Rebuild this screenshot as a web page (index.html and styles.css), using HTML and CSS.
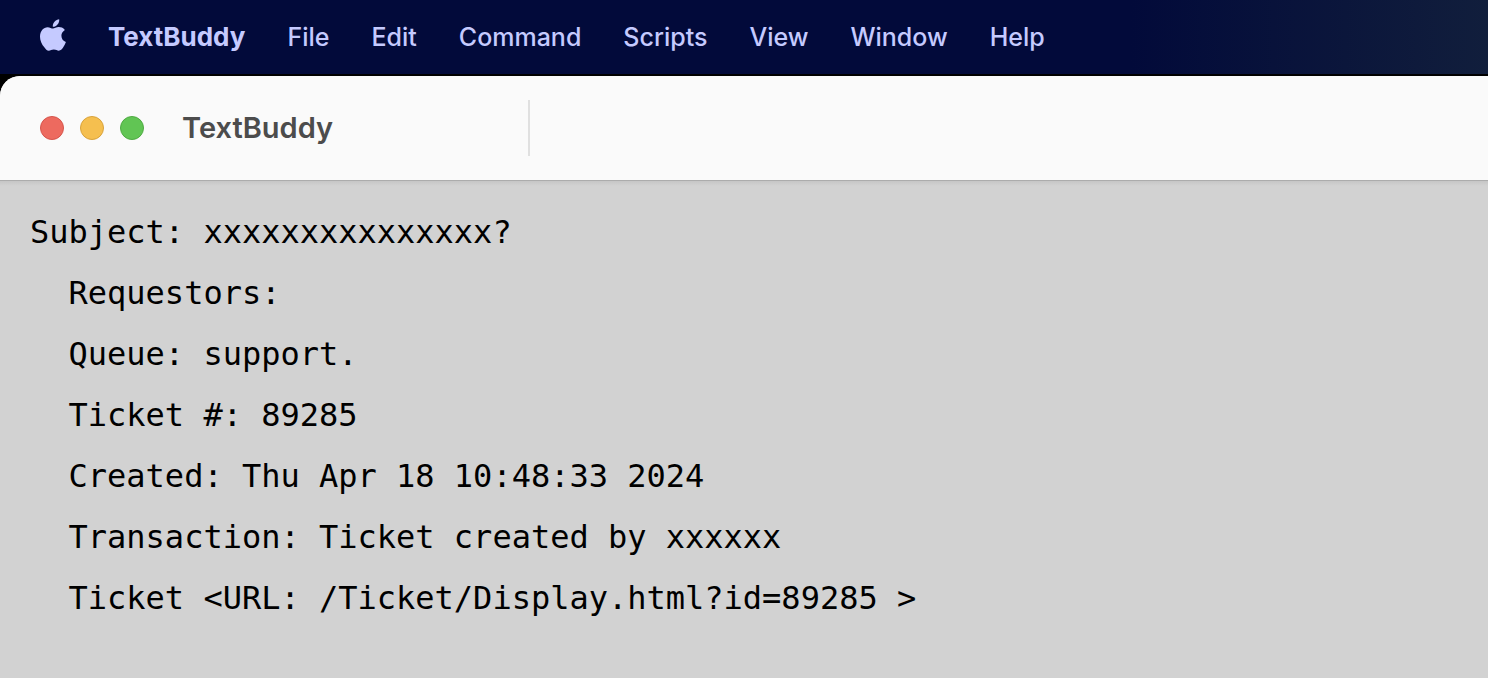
FILE: index.html
```html
<!DOCTYPE html>
<html lang="en">
<head>
<meta charset="utf-8">
<title>TextBuddy</title>
<link rel="stylesheet" href="styles.css">
</head>
<body>
<nav class="menubar" aria-label="Menu bar">
  <button class="menu menu-logo" type="button" aria-label="Apple menu">
    <svg class="logo" viewBox="0 0 26 32" aria-hidden="true">
      <path d="M19.2 0.2c.3 2-.5 3.900-1.700 5.300-1.200 1.400-3 2.400-4.700 2.300-.3-1.900.6-3.800 1.700-5.100C15.700 1.300 17.700.3 19.200.2z"/>
      <path d="M24.900 10.900c-2.200 1.400-3.500 3.300-3.500 5.900 0 3 1.800 5.300 4.500 6.300-.6 2-1.600 3.800-2.800 5.500-1.200 1.700-2.400 3.100-4.300 3.100-1.800 0-2.500-1.200-5-1.200-2.400 0-3.200 1.200-5 1.200-1.900 0-3.200-1.500-4.500-3.400C1.700 25.300 0 21.500 0 17.700c0-5.900 3.600-9.500 7.600-9.500 2.200 0 4 1.400 5.400 1.400 1.300 0 3.300-1.500 5.800-1.500 1.900 0 4.500.7 6.100 2.800z"/>
    </svg>
  </button>
  <button class="menu menu-app" type="button">TextBuddy</button>
  <button class="menu" type="button">File</button>
  <button class="menu" type="button">Edit</button>
  <button class="menu" type="button">Command</button>
  <button class="menu" type="button">Scripts</button>
  <button class="menu" type="button">View</button>
  <button class="menu" type="button">Window</button>
  <button class="menu" type="button">Help</button>
</nav>
<main class="window">
  <header class="titlebar">
    <div class="heading">
      <div class="controls">
        <button class="control close" type="button" aria-label="Close"></button>
        <button class="control minimize" type="button" aria-label="Minimize"></button>
        <button class="control zoom" type="button" aria-label="Zoom"></button>
      </div>
      <h1 class="title">TextBuddy</h1>
    </div>
  </header>
  <textarea class="editor" aria-label="Document text" spellcheck="false">Subject: xxxxxxxxxxxxxxx?
  Requestors:
  Queue: support.
  Ticket #: 89285
  Created: Thu Apr 18 10:48:33 2024
  Transaction: Ticket created by xxxxxx
  Ticket &lt;URL: /Ticket/Display.html?id=89285 &gt;</textarea>
</main>
</body>
</html>
```

FILE: styles.css
```css
* {
  box-sizing: border-box;
}

body {
  margin: 0;
  min-height: 100vh;
  display: flex;
  flex-direction: column;
  background: #000;
  font-family: Inter, "Liberation Sans", sans-serif;
}

button {
  border: 0;
  padding: 0;
  background: none;
  font: inherit;
  color: inherit;
}

.menubar {
  display: flex;
  align-items: center;
  gap: 42px;
  padding: 22px 40px;
  margin-bottom: 2px;
  background: linear-gradient(90deg, #020a3a 76%, #111e3c 100%);
  color: #c5caff;
  font-size: 25px;
  font-weight: 500;
  line-height: 30px;
}

.menu {
  white-space: nowrap;
}

.menu-app {
  font-size: 26px;
  font-weight: 700;
}

.logo {
  display: block;
  width: 26px;
  height: 32px;
  margin: -3px 0 1px;
  fill: currentColor;
}

.window {
  flex: 1;
  display: flex;
  flex-direction: column;
  overflow: hidden;
  border-top-left-radius: 20px;
  background: #d2d2d2;
}

.titlebar {
  padding: 24px 0;
  background: #fafafa;
}

.heading {
  display: flex;
  align-items: center;
  gap: 38px;
  width: 530px;
  height: 56px;
  padding-left: 40px;
  border-right: 2px solid #e0e0e0;
}

.controls {
  display: flex;
  gap: 16px;
}

.control {
  width: 24px;
  height: 24px;
  border: 1px solid;
  border-radius: 50%;
}

.close {
  background: #ed6a5f;
  border-color: #d6554c;
}

.minimize {
  background: #f5bf4f;
  border-color: #d9a33c;
}

.zoom {
  background: #61c554;
  border-color: #4fab43;
}

.title {
  margin: 0;
  color: #4c4c4c;
  font-size: 29px;
  font-weight: 600;
  line-height: 36px;
}

.editor {
  flex: 1;
  display: block;
  width: 100%;
  padding: 22px 30px;
  border: 0;
  outline: 0;
  resize: none;
  background: linear-gradient(#acacac 1px, #c6c6c6 1px, #d2d2d2 6px);
  color: #000;
  font-family: "DejaVu Sans Mono", "Liberation Mono", monospace;
  font-size: 32px;
  line-height: 61px;
}
```
